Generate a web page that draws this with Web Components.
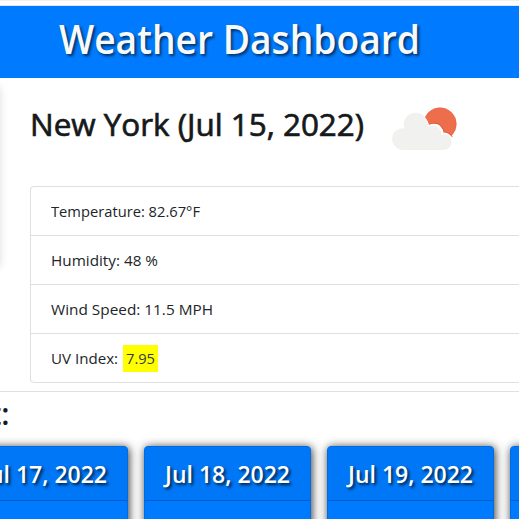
<!DOCTYPE html>
<html lang="en">
<head>
<meta charset="utf-8">
<title>Weather Dashboard</title>
<style>
html,body{margin:0;height:100%;overflow:hidden;background:#fff}
body{font-family:"Open Sans","Noto Sans",sans-serif;color:#212529}
</style>
</head>
<body>
<weather-app></weather-app>
<script>
/* Single line of text condensed to a given advance width. */
class FitText extends HTMLElement{
  connectedCallback(){
    const r=this.attachShadow({mode:'open'});
    r.innerHTML='<style>:host{display:inline-block;white-space:nowrap;flex:none}span{display:inline-block;transform-origin:0 50%}</style><span><slot></slot></span>';
    const w=+this.getAttribute('w'),s=r.querySelector('span');
    this.style.width=w+'px';
    s.style.transform='scaleX('+w/s.getBoundingClientRect().width+')';
  }
}
class AppHeader extends HTMLElement{
  constructor(){super();this.attachShadow({mode:'open'}).innerHTML=`<style>
  :host{display:flex;flex:none;align-items:center;box-sizing:border-box;height:72px;padding:0 0 6px 59px;background:#007bff;color:#f8f9fa;font-size:39.500px;line-height:48px;font-weight:600;text-shadow:2px 2px 3px #0009}
  </style><slot></slot>`}
}
class CloudIcon extends HTMLElement{
  constructor(){super();this.attachShadow({mode:'open'}).innerHTML=`<style>:host{display:block;width:67px;height:44px;flex:none}svg{display:block}</style>
  <svg width="67" height="44" viewBox="0 0 67 44">
  <circle cx="49" cy="17" r="16.3" fill="#ec6e4c" stroke="#e9572f" stroke-width=".5"/>
  <path d="M33.500 10.500q3.700 2.900 4.800 7.200q7-3.600 12 1.500q2.400 2.700 2.500 6.100q5.300-.3 8.500 4.700" fill="none" stroke="#e8532b" stroke-width="1"/>
  <path d="M31 9L34 10.500Q37.200 13.500 38 17.800Q46 14.800 50 20Q52.400 22.500 52.400 25.600Q58 25.600 61 30.500L62 38L31 38z" fill="#fff"/>
  <path d="M11 43A10.700 10.700 0 0 1 13.200 21.200A12 12 0 0 1 25 5.700A12.300 12.300 0 0 1 36.700 19.800A9.300 9.300 0 0 1 50.700 27.500A7.900 7.900 0 1 1 53 43z" fill="#f1f2f0"/>
  </svg>`}
}
class StatRow extends HTMLElement{
  constructor(){super();this.attachShadow({mode:'open'}).innerHTML=`<style>
  :host{display:flex;align-items:center;box-sizing:border-box;height:49px;padding:0 0 0 20px;border-bottom:1px solid #dfdfdf;font-size:15.300px;line-height:24px}
  </style><slot></slot>`}
}
class StatList extends HTMLElement{
  constructor(){super();this.attachShadow({mode:'open'}).innerHTML=`<style>
  :host{display:block;margin:0 -20px 0 30px;border:1px solid #dfdfdf;border-bottom:0;border-radius:4px}
  ::slotted(:last-child){border-radius:0 0 0 4px}
  </style><slot></slot>`}
}
class DayCard extends HTMLElement{
  constructor(){super();this.attachShadow({mode:'open'}).innerHTML=`<style>
  :host{display:block;box-sizing:border-box;flex:none;width:167px;height:180px;border:1px solid #006ce0;border-radius:4px;background:#007bff;color:#fff;box-shadow:1px 1px 10px #000c}
  header{box-sizing:border-box;height:54px;padding:2px 0 0 20px;display:flex;align-items:center;background:#0077f7;border-bottom:1px solid #005fc4;border-radius:3px 3px 0 0;font-size:23.500px;line-height:29px;font-weight:600;text-shadow:2px 2px 3px #000b}
  </style><header><slot></slot></header>`}
}
class WeatherApp extends HTMLElement{
  constructor(){super();this.attachShadow({mode:'open'}).innerHTML=`<style>
  :host{display:flex;flex-direction:column;height:519px;overflow:hidden}
  .top{box-sizing:border-box;height:6px;flex:none;border-top:1px solid #f0f0f0;border-bottom:1px solid #e3e8ee}
  main{height:313px;flex:none;display:grid;grid-template-columns:0 1fr;border-bottom:1px solid #e0e0e0}
  aside{width:10px;height:180px;margin:9px 0 0 -10px;box-shadow:0 0 8px #0002}
  .head{display:flex;align-items:flex-start;height:108px;padding-left:30px;box-sizing:border-box}
  h2{margin:26px 27px 0 0;font-size:31.200px;line-height:40px;font-weight:400;-webkit-text-stroke:.7px #16191b;color:#16191b}
  cloud-icon{margin-top:29px}
  mark{display:flex;align-items:center;height:27px;margin-left:5px;padding:0 3px;background:#ff0;color:#343a40}
  .next{height:54px;flex:none;display:flex;justify-content:flex-end;width:9.500px;font-size:30px;line-height:43px;font-weight:600;white-space:nowrap;color:#16191b}
  .cards{display:flex;gap:16px;margin-left:-39px}
  </style>
  <div class="top"></div>
  <app-header><fit-text w="361">Weather Dashboard</fit-text></app-header>
  <main><aside></aside><section>
    <div class="head"><h2><fit-text w="334">New York (Jul 15, 2022)</fit-text></h2><cloud-icon></cloud-icon></div>
    <stat-list>
      <stat-row><fit-text w="149">Temperature: 82.67°F</fit-text></stat-row>
      <stat-row><fit-text w="107">Humidity: 48 %</fit-text></stat-row>
      <stat-row><fit-text w="162">Wind Speed: 11.5 MPH</fit-text></stat-row>
      <stat-row><fit-text w="67">UV Index:</fit-text><mark><fit-text w="29">7.95</fit-text></mark></stat-row>
    </stat-list>
  </section></main>
  <div class="next">t:</div>
  <div class="cards">
    <day-card><fit-text w="125">Jul 17, 2022</fit-text></day-card>
    <day-card><fit-text w="125">Jul 18, 2022</fit-text></day-card>
    <day-card><fit-text w="125">Jul 19, 2022</fit-text></day-card>
    <day-card></day-card>
  </div>`}
}
customElements.define('app-header',AppHeader);
customElements.define('cloud-icon',CloudIcon);
customElements.define('stat-row',StatRow);
customElements.define('stat-list',StatList);
customElements.define('day-card',DayCard);
customElements.define('weather-app',WeatherApp);
customElements.define('fit-text',FitText);
</script>
</body>
</html>
